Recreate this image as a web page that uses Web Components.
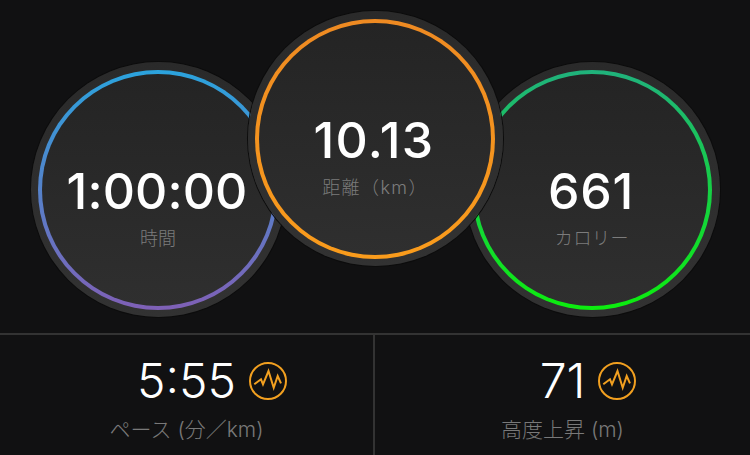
<!DOCTYPE html>
<html lang="ja"><head><meta charset="utf-8"><style>
html,body{margin:0;padding:0;background:#111112}
body{width:750px;height:455px;overflow:hidden;font-family:Inter,"Noto Sans CJK JP",sans-serif}
</style></head><body>
<activity-summary>
  <stat-dial slot="dials" style="--c1:#2ba3dd;--c2:#7f60b6;--top:62px;--z:1;--gap:-38px;--ls:.1px;--lls:0" value="1:00:00" label="時間"></stat-dial>
  <stat-dial slot="dials" style="--c1:#ee8a22;--c2:#fa9c1c;--top:11px;--z:2;--gap:-38px;--ls:1.3px;--lls:1.4px" value="10.13" label="距離（km）"></stat-dial>
  <stat-dial slot="dials" style="--c1:#20b27c;--c2:#0ced0e;--top:62px;--z:1;--gap:0;--ls:.7px;--lls:.6px" value="661" label="カロリー"></stat-dial>
  <stat-cell slot="cells" value="5:55" label="ペース (分／km)"></stat-cell>
  <stat-cell slot="cells" style="border-left:2px solid #333" value="71" label="高度上昇 (m)"></stat-cell>
</activity-summary>
<script>
class ActivitySummary extends HTMLElement{constructor(){super();this.attachShadow({mode:'open'}).innerHTML=`<style>
:host{display:flex;flex-direction:column;width:750px;height:455px;background:#111112}
.dials{display:flex;flex:none;justify-content:center;align-items:flex-start;height:333px}
.cells{display:grid;grid-template-columns:373px 1fr;flex:none;height:120px;border-top:2px solid #333}
</style><div class="dials"><slot name="dials"></slot></div><div class="cells"><slot name="cells"></slot></div>`}}
class StatDial extends HTMLElement{constructor(){super();this.attachShadow({mode:'open'}).innerHTML=`<style>
:host{display:block;flex:none;width:255px;height:255px;margin-top:var(--top);margin-right:var(--gap);position:relative;z-index:var(--z);border-radius:50%;background:linear-gradient(#2a2a2a,#323232);box-sizing:border-box;padding:7.5px;box-shadow:0 0 0 1px #0c0c0c}
.ring{height:100%;box-sizing:border-box;border-radius:50%;padding:4px;background:linear-gradient(var(--c1),var(--c2))}
.disc{height:100%;border-radius:50%;background:linear-gradient(#242424,#2f2f2f);display:flex;flex-direction:column;align-items:center;padding-top:34px;box-sizing:border-box;justify-content:center}
.v{font-size:50px;line-height:56px;font-weight:550;color:#fff;letter-spacing:var(--ls);margin-right:2px}
.l{font-size:18px;line-height:24px;color:#7c7c7c;margin-top:8px;font-weight:300;letter-spacing:var(--lls)}
</style><div class="ring"><div class="disc"><div class="v"></div><div class="l"></div></div></div>`}
connectedCallback(){const s=this.shadowRoot;s.querySelector('.v').textContent=this.getAttribute('value');s.querySelector('.l').textContent=this.getAttribute('label')}}
class EffectIcon extends HTMLElement{constructor(){super();this.attachShadow({mode:'open'}).innerHTML=`<style>:host{display:block;width:38px;height:38px;flex:none}svg{display:block}</style>
<svg width="38" height="38" viewBox="-19 -19 38 38" fill="none" stroke="#f2a020" stroke-width="2"><circle r="18"/><path d="M-13.7 3.3-7-1.7-5 3.3 .5-10 5.7 6.7 9.7-5 13 2.3"/></svg>`}}
class StatCell extends HTMLElement{constructor(){super();this.attachShadow({mode:'open'}).innerHTML=`<style>
:host{display:flex;flex-direction:column;align-items:center;box-sizing:border-box;padding-top:18px}
.top{display:flex;align-items:center;gap:13px;height:56px;padding-left:51px}
.v{font-size:48px;line-height:56px;color:#fff;font-weight:300}
.l{font-size:21px;line-height:28px;color:#797979;margin-top:7px;font-weight:300}
</style><div class="top"><div class="v"></div><effect-icon></effect-icon></div><div class="l"></div>`}
connectedCallback(){const s=this.shadowRoot;s.querySelector('.v').textContent=this.getAttribute('value');s.querySelector('.l').textContent=this.getAttribute('label')}}
customElements.define('activity-summary',ActivitySummary);
customElements.define('stat-dial',StatDial);
customElements.define('effect-icon',EffectIcon);
customElements.define('stat-cell',StatCell);
</script>
</body></html>
